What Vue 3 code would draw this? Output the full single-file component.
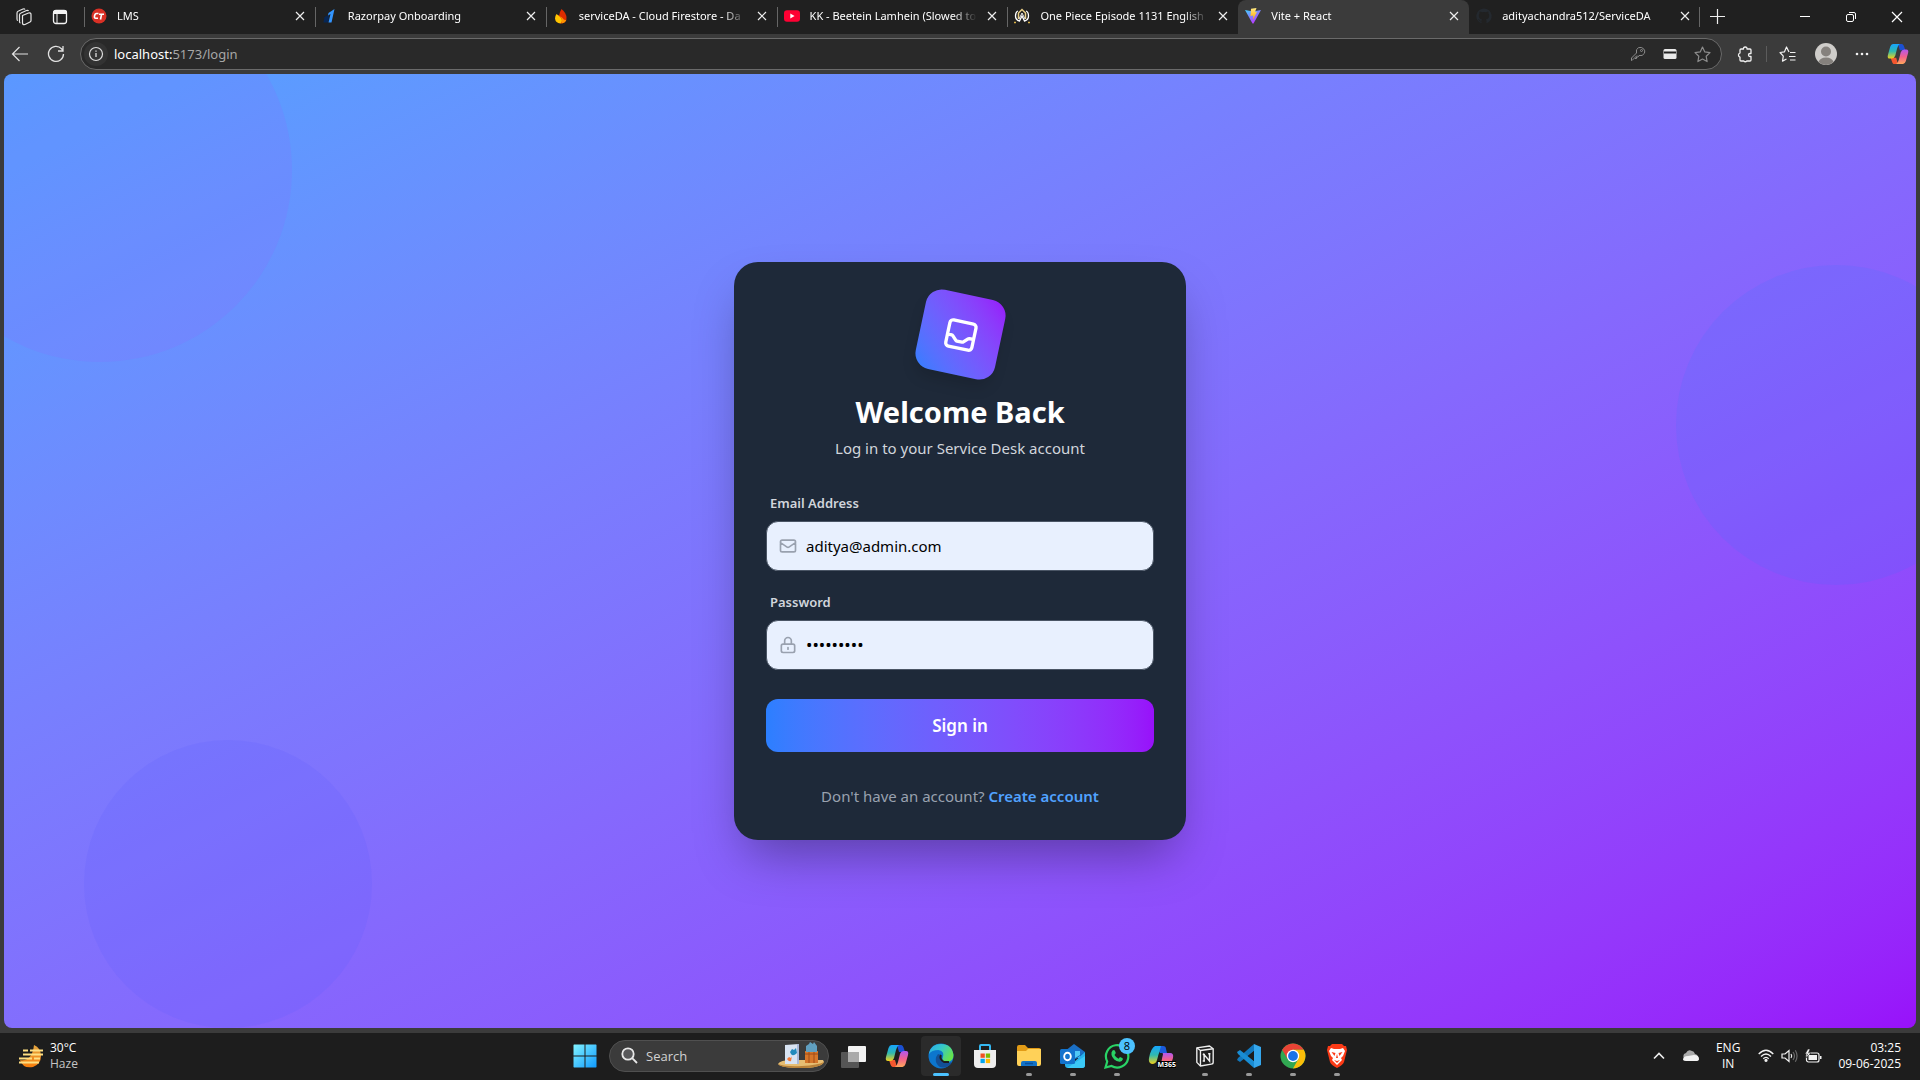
<script setup>
import { ref } from 'vue'

const email = ref('aditya@admin.com')
const password = ref('admin1234')

const tabs = [
  { title: 'LMS', icon: 'lms' },
  { title: 'Razorpay Onboarding', icon: 'razorpay' },
  { title: 'serviceDA - Cloud Firestore - Da', icon: 'firebase' },
  { title: 'KK - Beetein Lamhein (Slowed to', icon: 'youtube' },
  { title: 'One Piece Episode 1131 English', icon: 'anime' },
  { title: 'Vite + React', icon: 'vite', active: true },
  { title: 'adityachandra512/ServiceDA', icon: 'github' },
]
</script>

<template>
  <div class="screen">
    <header class="tabbar">
      <div class="tab-tools">
        <button class="icon-btn" aria-label="Workspaces">
          <svg width="18" height="18" viewBox="0 0 18 18" fill="none" stroke="#e6e6e6" stroke-width="1.2" stroke-linejoin="round"><path d="M7.500 7.500l6-2.500q2.500-.5 2.500 1.500v6q0 1-1 1.500l-5 2.500q-2.500.5-2.500-1.500zM4.500 13.500V7q0-1.500 1.500-2l5.500-2.500q1.500-.5 2 .5M2 11V5q0-1.500 1.500-2L8 1q1.500-.5 2 .5M2 11q0 1.500 1 1.500M4.500 13.500q0 1.500 1 1.500"/></svg>
        </button>
        <button class="icon-btn" aria-label="Tab actions">
          <svg width="16" height="16" viewBox="0 0 16 16"><rect x="1.500" y="1.500" width="13" height="13" rx="2.500" fill="none" stroke="#f4f4f4" stroke-width="1.300"/><path d="M1 5V3.500Q1 1 3.500 1h9Q15 1 15 3.500V5z" fill="#f4f4f4"/><path d="M5 5v9.500" stroke="#f4f4f4"/></svg>
        </button>
      </div>
      <nav class="tabs">
        <div v-for="tab in tabs" :key="tab.title" class="tab" :class="{ active: tab.active }">
          <svg class="favicon" width="16" height="16" viewBox="0 0 16 16">
            <template v-if="tab.icon === 'lms'">
              <circle cx="8" cy="8" r="7.500" fill="#d93025"/><path d="M7.500 5.500H5.500Q4 5.500 3.500 8T5 10.200h2M8 6.200h5M10.600 6.200L9.500 11.500" fill="none" stroke="#fff" stroke-width="1.600"/>
            </template>
            <template v-else-if="tab.icon === 'razorpay'">
              <path d="M7 6.500L2.500 9 1.500 14.500h5z" fill="#072654"/><path d="M12.500 1L6.500 5l-.5 2.500 2.500-1.500L6.500 14.500H9.500z" fill="#3395ff"/>
            </template>
            <template v-else-if="tab.icon === 'firebase'">
              <path d="M8.500 1q5 4 5 9t-5.500 5.500Q3 14.500 3 10q.5-2 2-3 0 0 1 1 .500-4 2.500-7z" fill="#dd2c00"/><path d="M3.500 6Q2 8 2 10.500q.5 4.500 5.500 5 1.500-.500 1.500-3.500Q8 9 5.500 7.500z" fill="#ffc400"/><path d="M7 8q2.500 2.500 1.500 7.500 4-.500 5-4-2 1.500-4-1.500z" fill="#ff9100"/>
            </template>
            <template v-else-if="tab.icon === 'youtube'">
              <rect y="2.300" width="16" height="11.500" rx="3" fill="#ff0033"/><path d="M6.300 5.500v5l4.300-2.500z" fill="#fff"/>
            </template>
            <template v-else-if="tab.icon === 'anime'">
              <path d="M4 3Q1.500 4 1.500 8t4 5l2.500-5 2.500 5q4-1 4-5T12 3" fill="none" stroke="#fff" stroke-width="1.300"/><path d="M4.500 11V5L8 1.500 11.500 5v6" fill="none" stroke="#e9cf87" stroke-width="1.500"/><path d="M5 11L8 5l3 6" fill="none" stroke="#eee"/><path d="M0 14.500h2M14 14.500h2" stroke="#d7b14a" stroke-width="1.500"/>
            </template>
            <template v-else-if="tab.icon === 'vite'">
              <defs><linearGradient id="viteBody" x1="0" y1="0" x2=".6" y2="1"><stop stop-color="#41d1ff"/><stop offset="1" stop-color="#bd34fe"/></linearGradient><linearGradient id="viteBolt" x1="0" y1="0" x2="0" y2="1"><stop stop-color="#ffea83"/><stop offset="1" stop-color="#ffa800"/></linearGradient></defs>
              <path d="M0 2l8 1.400L16 2 8.500 15.500h-1z" fill="url(#viteBody)"/><path d="M6 .8l5.500-.8-1.500 4 2-.3-4 8 .3-4.200-2.800.4z" fill="url(#viteBolt)"/>
            </template>
            <path v-else d="M8 .5A7.600 7.600 0 0 0 5.500 15.300V13.500q-2 .4-2.600-1.300l-1-.8q1-.4 2 1 .8.700 1.800.2l.4-1Q2.800 11 2.800 7.500q0-1 .8-2-.3-1 .1-2 1 0 2.200.8 2-.5 4.200 0 1.200-.8 2.200-.8.400 1 .1 2 .8 1 .8 2 0 3.500-3.300 4.100.6.500.6 1.600v2.100A7.600 7.600 0 0 0 8 .5z" fill="#24292f"/>
          </svg>
          <span class="tab-title">{{ tab.title }}</span>
          <button class="close" :aria-label="'Close ' + tab.title">
            <svg width="10" height="10" viewBox="0 0 10 10" stroke="#eee" stroke-width="1.200"><path d="M1 1l8 8M9 1L1 9"/></svg>
          </button>
        </div>
      </nav>
      <button class="icon-btn new-tab" aria-label="New tab">
        <svg width="15" height="15" viewBox="0 0 15 15" stroke="#eee" stroke-width="1.200"><path d="M7.500 0v15M0 7.500h15"/></svg>
      </button>
      <div class="window-controls">
        <button aria-label="Minimise"><svg width="12" height="12" viewBox="0 0 12 12" stroke="#fff"><path d="M1 5.500h10"/></svg></button>
        <button aria-label="Restore"><svg width="12" height="12" viewBox="0 0 12 12" fill="none" stroke="#fff"><rect x="1.500" y="3.500" width="7" height="7" rx="1.500"/><path d="M4 1.500h5q1.500 0 1.500 1.500v5"/></svg></button>
        <button aria-label="Close window"><svg width="12" height="12" viewBox="0 0 12 12" stroke="#fff" stroke-width="1.200"><path d="M1 1l10 10M11 1L1 11"/></svg></button>
      </div>
    </header>

    <div class="toolbar">
      <div class="history">
        <button class="icon-btn" aria-label="Back">
          <svg width="18" height="18" viewBox="0 0 18 18" fill="none" stroke="#e2e2e2" stroke-width="1.200"><path d="M17 9H1.500M8.500 2L1.500 9l7 7"/></svg>
        </button>
        <button class="icon-btn" aria-label="Refresh">
          <svg width="18" height="18" viewBox="0 0 18 18" fill="none" stroke="#e2e2e2" stroke-width="1.300"><path d="M16.500 9A7.500 7.500 0 1 1 14.500 3.800L16 5.500M16 1v5h-5"/></svg>
        </button>
      </div>
      <div class="address">
        <span class="site-info">
          <svg width="16" height="16" viewBox="0 0 16 16" fill="none" stroke="#ddd" stroke-width="1.200"><circle cx="8" cy="8" r="6.500"/><path d="M8 7v4M8 4.500v1.300" stroke-width="1.300"/></svg>
        </span>
        <span class="url"><b>localhost:</b>5173/login</span>
        <div class="address-icons">
          <svg width="16" height="16" viewBox="0 0 16 16" fill="none" stroke="#8c8c8c"><path d="M7 9.500L2 14.500H1.500V12L6.500 7Q5.500 3 8.500 1.700q3-1 5 1t1 4.500Q12.500 10.500 9 9.500L8 11H6.500v1.500H5"/><circle cx="11.500" cy="4.500" r="1"/></svg>
          <svg width="14" height="12" viewBox="0 0 14 12"><rect x=".5" y="1" width="13" height="10" rx="1.500" fill="#e9e9e9"/><path d="M1 4.500h12" stroke="#222" stroke-width="2"/></svg>
          <svg width="17" height="17" viewBox="0 0 17 17" fill="none" stroke="#8c8c8c" stroke-width="1.200" stroke-linejoin="round"><path d="M8.500 1l2.300 4.900 5.200.7-3.800 3.700.9 5.300-4.600-2.600-4.600 2.600.9-5.300L1 6.600l5.200-.7z"/></svg>
        </div>
      </div>
      <div class="browser-tools">
        <button class="icon-btn" aria-label="Extensions"><svg width="17" height="17" viewBox="0 0 17 17" fill="none" stroke="#f2f2f2" stroke-width="1.300" stroke-linejoin="round"><path d="M4 3h2.500q-.2-2 1.700-2t1.800 2h3q1 0 1 1v3.500h-1a1.500 1.500 0 0 0 0 3h1V14q0 1-1 1H9.800q-1.500 1.500-3 0H4q-1 0-1-1v-2.800a2.200 2.200 0 0 1 0-4.200V4q0-1 1-1z"/></svg></button>
        <i class="divider"></i>
        <button class="icon-btn" aria-label="Favourites"><svg width="18" height="17" viewBox="0 0 18 17" fill="none" stroke="#f2f2f2" stroke-width="1.200" stroke-linejoin="round"><path d="M10 6L7.500 1 5.500 5.800 1 6.500l3.300 3.600-.8 5L7.500 13M11 6.500h5.500M10 10.500h6.500M11 14h5.500"/></svg></button>
        <button class="icon-btn spaced" aria-label="Profile"><svg width="22" height="22" viewBox="0 0 22 22"><circle cx="11" cy="11" r="11" fill="#cfcdca"/><circle cx="11" cy="8.500" r="5" fill="#85817d"/><path d="M3.500 19Q5 14.500 11 14.500t7.500 4.500Q15 22 11 22t-7.500-3z" fill="#85817d"/></svg></button>
        <button class="icon-btn spaced" aria-label="More"><svg width="14" height="4" viewBox="0 0 14 4" fill="#f2f2f2"><circle cx="2" cy="2" r="1.300"/><circle cx="7" cy="2" r="1.300"/><circle cx="12" cy="2" r="1.300"/></svg></button>
        <button class="icon-btn spaced" aria-label="Copilot"><svg width="22" height="22" viewBox="0 0 24 24"><use href="#copilot"/></svg></button>
      </div>
    </div>

    <main class="page">
      <span class="circle circle-a"></span>
      <span class="circle circle-b"></span>
      <span class="circle circle-c"></span>
      <section class="card">
        <div class="logo">
          <svg width="40" height="40" viewBox="0 0 24 24" fill="none" stroke="#fff" stroke-width="2" stroke-linecap="round" stroke-linejoin="round"><path d="M20 13V6a2 2 0 0 0-2-2H6a2 2 0 0 0-2 2v7m16 0v5a2 2 0 0 1-2 2H6a2 2 0 0 1-2-2v-5m16 0h-2.600a1 1 0 0 0-.7.300l-2.400 2.400a1 1 0 0 1-.7.300h-3.200a1 1 0 0 1-.7-.3l-2.400-2.400a1 1 0 0 0-.7-.3H4"/></svg>
        </div>
        <h1>Welcome Back</h1>
        <p class="subtitle">Log in to your Service Desk account</p>
        <form @submit.prevent>
          <label for="email">Email Address</label>
          <div class="field">
            <svg width="20" height="20" viewBox="0 0 24 24" fill="none" stroke="#99a1af" stroke-width="2" stroke-linecap="round" stroke-linejoin="round"><path d="M3 8l7.900 5.300a2 2 0 0 0 2.200 0L21 8M5 19h14a2 2 0 0 0 2-2V7a2 2 0 0 0-2-2H5a2 2 0 0 0-2 2v10a2 2 0 0 0 2 2z"/></svg>
            <input id="email" v-model="email" type="email">
          </div>
          <label for="password">Password</label>
          <div class="field">
            <svg width="20" height="20" viewBox="0 0 24 24" fill="none" stroke="#99a1af" stroke-width="2" stroke-linecap="round" stroke-linejoin="round"><path d="M12 15v2m-6 4h12a2 2 0 0 0 2-2v-6a2 2 0 0 0-2-2H6a2 2 0 0 0-2 2v6a2 2 0 0 0 2 2zm10-10V7a4 4 0 0 0-8 0v4h8z"/></svg>
            <input id="password" v-model="password" type="password">
          </div>
          <button class="submit" type="submit">Sign in</button>
        </form>
        <p class="signup">Don't have an account? <a href="#">Create account</a></p>
      </section>
    </main>

    <footer class="taskbar">
      <div class="weather">
        <svg width="26" height="26" viewBox="0 0 26 26"><defs><linearGradient id="moon" x1="0" y1="0" x2="0" y2="1"><stop stop-color="#e2a541"/><stop offset="1" stop-color="#f97d0b"/></linearGradient></defs><path d="M16 2q7 3 7 11t-8 11Q5 26 2 17q12 2 14-15z" fill="url(#moon)"/><path d="M5 7.500h5M12 7.500h13M5 11.500h20M1 15.500h13M16 15.500h6M1 19.500h20" stroke="#ffdf82" stroke-width="2"/></svg>
        <div class="weather-text"><span>30°C</span><span class="muted">Haze</span></div>
      </div>

      <div class="apps">
        <button class="app" aria-label="Start"><svg width="24" height="24" viewBox="0 0 24 24"><defs><linearGradient id="win" x1="0" y1="0" x2="1" y2="1"><stop stop-color="#82f3ff"/><stop offset="1" stop-color="#0f9aff"/></linearGradient></defs><path d="M1 .5h10.500v11H.5V1zM12.500.5H23l.5.500v10.500h-11zM.5 12.500h11v11H1L.5 23zM12.500 12.500h11V23l-.5.500H12.500z" fill="url(#win)"/></svg></button>
        <label class="search">
          <svg width="17" height="17" viewBox="0 0 17 17" fill="#58585a" stroke="#e8e8e8" stroke-width="1.800"><circle cx="7" cy="7" r="5.700"/><path d="M11.200 11.200L16 16"/></svg>
          <input type="text" placeholder="Search" aria-label="Search">
          <svg width="48" height="28" viewBox="0 0 48 28"><path d="M1 22q2-4 14-4h31l1 2q-3 6-23 6T1 22z" fill="#e6bd72"/><path d="M1 22q8 3 24 2t22-4q-3 6-23 6T1 22z" fill="#b98239"/><path d="M8 3l14-1v20H8z" fill="#d8e3f2"/><path d="M20 2h2v20h-2z" fill="#a9b8d8"/><path d="M13 10l2-3 2 1 2-2 1 5q-4 4-6 1z" fill="#2189bc"/><path d="M10 17l2-2 2 1 1-2-1 5q-2 1-4-2z" fill="#f27836"/><path d="M28 9h13v12H28z" fill="#d6772a"/><path d="M28 12h13M32 9v12M37 9v12" stroke="#a04c18"/><path d="M29 4l3-2 1-2 3 2 1-2 3 4v6H29z" fill="#609fc0"/></svg>
        </label>
        <button class="app" aria-label="Task view"><svg width="26" height="24" viewBox="0 0 26 24"><rect x="8" y="2" width="18" height="16" rx="1" fill="#f3f3f3"/><rect x="1" y="8" width="18" height="16" rx="1" fill="#555"/><path d="M8 8h11v10H8z" fill="#aaa"/></svg></button>
        <button class="app" aria-label="Copilot"><svg width="24" height="24" viewBox="0 0 24 24">
          <defs>
            <linearGradient id="copA" x1="0" y1="0" x2="0" y2="1"><stop stop-color="#16a4ff"/><stop offset=".5" stop-color="#2fb9b0"/><stop offset="1" stop-color="#f2d21a"/></linearGradient>
            <linearGradient id="copB" x1="0" y1="0" x2="0" y2="1"><stop stop-color="#b057f2"/><stop offset=".5" stop-color="#f2608c"/><stop offset="1" stop-color="#ffa75b"/></linearGradient>
            <g id="copilot"><path d="M12 1h4q2 0 3 4l1 3h-6z" fill="#1b50d3"/><path d="M12 23H8q-2 0-3-4l-1-3h6z" fill="#f4572f"/><path d="M6.500 1H14q-2 1-3 5l-2 8q-1 3-4 3H3q-3 0-2-4l2.500-9Q4.500 1 6.500 1z" fill="url(#copA)"/><path d="M17.500 23H10q2-1 3-5l2-8q1-3 4-3h2q3 0 2 4l-2.500 9q-1 3-3 3z" fill="url(#copB)"/></g>
          </defs><use href="#copilot"/></svg></button>
        <button class="app current" aria-label="Edge"><svg width="26" height="26" viewBox="0 0 26 26"><defs><linearGradient id="edgeTop" x1="0" y1="0" x2="1" y2=".5"><stop stop-color="#2aa9ed"/><stop offset=".5" stop-color="#36c8c9"/><stop offset="1" stop-color="#65e34e"/></linearGradient></defs><circle cx="13" cy="13" r="12.500" fill="#0c76ce"/><path d="M1 10Q3 1 13 1q11 0 12.500 11 0 7-7 7-5 0-4-3 3-8-4-9-7 0-9.500 4z" fill="url(#edgeTop)"/><path d="M10 11q-4 5-1 10t9 3q4-1 6-5-5 2-9 0-5-3-2-7z" fill="#134f96"/><path d="M13 12q-2 4 3 7h5" fill="none" stroke="#1d1d1d" stroke-width="2"/></svg></button>
        <button class="app" aria-label="Store"><svg width="24" height="26" viewBox="0 0 24 26"><path d="M7 8V3q0-1 1-1h8q1 0 1 1v5" fill="none" stroke="#35b8f1" stroke-width="2"/><path d="M1 7h22v14q0 4-4 4H5q-4 0-4-4z" fill="#eee"/><path d="M7.500 10.500h4.300v4.300H7.500z" fill="#f25022"/><path d="M12.800 10.500h4.300v4.300h-4.300z" fill="#7fba00"/><path d="M7.500 15.800h4.300v4.300H7.500z" fill="#00a4ef"/><path d="M12.800 15.800h4.300v4.300h-4.300z" fill="#ffb900"/></svg></button>
        <button class="app open" aria-label="File Explorer"><svg width="26" height="24" viewBox="0 0 26 24"><path d="M1 3q0-2 2-2h6l3 3h11q2 0 2 2v5H1z" fill="#e29b16"/><path d="M1 7h9l2-2h13v15q0 2-2 2H3q-2 0-2-2z" fill="#ffd158"/><path d="M5 22v-3q0-2 2-2h12q2 0 2 2v3z" fill="#1372c5"/><path d="M9 19.500h8" stroke="#0a4e9a" stroke-width="1.500"/></svg></button>
        <button class="app open" aria-label="Outlook"><svg width="26" height="26" viewBox="0 0 26 26"><path d="M5 8l9-7 11 8v5H5z" fill="#1b6fc5"/><path d="M9 8h11v7H9z" fill="#50c8f5"/><path d="M25 9v13q0 3-3 3H8q-3 0-3-3v-4l9 1z" fill="#26b1ec"/><path d="M25 9L7 20l-2-2v-3l11 1z" fill="#1267b4"/><path d="M7 25l18-12v9q0 3-3 3z" fill="#3bc9f7"/><rect y="6" width="15" height="15" rx="1.500" fill="#1373cd"/><ellipse cx="7.500" cy="13.500" rx="3.300" ry="3.700" fill="none" stroke="#fff" stroke-width="1.900"/></svg></button>
        <button class="app open" aria-label="WhatsApp"><svg width="26" height="26" viewBox="0 0 26 26"><path d="M1.500 24.500l1.700-6A11.200 11.200 0 1 1 7.500 23z" fill="#1d1d1d" stroke="#29d366" stroke-width="2.200"/><path d="M8.500 7.500l1.500-.500q1 0 1.800 3L10.500 12q1.500 2.700 4 3.700l1.500-1.700q3 1 3 2-1 3-3.500 2.800Q9 17.500 7.500 12q-.5-3 1-4.500z" fill="#29d366"/></svg><span class="badge">8</span></button>
        <button class="app" aria-label="Microsoft 365 Copilot"><svg width="26" height="20" viewBox="0 0 26 20"><path d="M8 0h7q3 0 3 3l1 4h-7z" fill="#1a5bdd"/><path d="M7 0h6L9 14q-1 4-5 4-4-1-3-6Q3 2 7 0z" fill="url(#copA)"/><path d="M15 7h7q4 0 3 5l-2 6q-1 2-4 2h-7l2-9q0-3 1-4z" fill="url(#copB)"/><path d="M11 8h4l-2 9q-1 2-4 2z" fill="#1d1d1d"/></svg><span class="m365">M365</span></button>
        <button class="app open" aria-label="Notion"><svg width="20" height="22" viewBox="0 0 22 24"><path d="M2 3l14-2 4 3v15q0 2-2 2L6 23l-4-4z" fill="#1d1d1d" stroke="#eee" stroke-width="1.500" stroke-linejoin="round"/><path d="M2 3l4 3v17M6 6l14-2" fill="none" stroke="#eee" stroke-width="1.500"/><path d="M10 17.500V10.500l6 7V9.500M8.500 10.300h2.500M14.500 9.500h2.500M8.500 17.500h2.500" fill="none" stroke="#eee" stroke-width="1.600"/></svg></button>
        <button class="app open" aria-label="VS Code"><svg width="26" height="26" viewBox="0 0 26 26"><path d="M18 1l7 3v18l-7 3z" fill="#35a7ed"/><path d="M18 1v7L4 19l-3-2 1-2z" fill="#1177bd"/><path d="M18 25v-7L4 7 1 9l1 2z" fill="#198dd4"/><path d="M18 8v10l-6-5z" fill="#1d1d1d"/></svg></button>
        <button class="app open" aria-label="Chrome"><svg width="26" height="26" viewBox="0 0 26 26"><circle cx="13" cy="13" r="12.500" fill="#31a852"/><path d="M2.200 6.800A12.500 12.500 0 0 1 23.800 6.800H13L7.600 16z" fill="#e94335"/><path d="M23.800 6.800A12.500 12.500 0 0 1 13 25.500L18.400 16 13 6.800z" fill="#fbbd09"/><circle cx="13" cy="13" r="6.200" fill="#fff"/><circle cx="13" cy="13" r="4.900" fill="#1a73e8"/></svg></button>
        <button class="app open" aria-label="Brave"><svg width="22" height="26" viewBox="0 0 22 26"><path d="M6 1h10l2 2h2l1 4-3 12q-1 3-7 6-6-3-7-6L1 7l1-4h2z" fill="#fb3a16"/><path d="M5 5l3 1h6l3-1 2 3-2 5-2 2 1 2-5 5-5-5 1-2-2-2-2-5z" fill="#fff"/><path d="M5.500 9l4 1-1 3zM16.500 9l-4 1 1 3zM11 11l1 4h-2zM8 17l3 1 3-1-3 3z" fill="#fb3a16"/></svg></button>
      </div>

      <div class="tray">
        <svg width="12" height="8" viewBox="0 0 12 8" fill="none" stroke="#eee" stroke-width="1.600"><path d="M1 6.500l5-5 5 5"/></svg>
        <svg class="cloud" width="17" height="12" viewBox="0 0 17 12"><path d="M2 9Q0 4 4 3q2-4 6-2 2 0 3 3 4 1 3 6z" fill="#aaa"/><path d="M1 10q0-4 5-4l6-1q5 0 5 4 0 2-3 2H4q-2 0-3-1z" fill="#f2f2f2"/></svg>
        <div class="lang"><span>ENG</span><span>IN</span></div>
        <div class="status">
          <svg width="16" height="13" viewBox="0 0 16 13" fill="none" stroke="#f2f2f2" stroke-width="1.300"><path d="M.7 5q7.300-7.500 14.600 0M3 7.500q5-5 10 0M5.300 9.800q2.700-2.800 5.400 0"/><circle cx="8" cy="11.300" r="1" fill="#f2f2f2"/></svg>
          <svg width="17" height="14" viewBox="0 0 17 14" fill="none" stroke="#f2f2f2" stroke-width="1.200"><path d="M1 5h3l4-3.500v11L4 9H1z"/><path d="M10 5q1.500 2 0 4"/><path d="M12 3q3 4 0 8M14.300 1.200q3.500 5.800 0 11.600" stroke="#6a6a6a"/></svg>
          <svg width="17" height="14" viewBox="0 0 17 14"><rect x="1.500" y="4" width="12.500" height="9" rx="2" fill="none" stroke="#f2f2f2" stroke-width="1.200"/><rect x="3.500" y="6" width="8.500" height="5" fill="#f2f2f2"/><path d="M15 7h1.500v3H15z" fill="#f2f2f2"/><path d="M3 0L0 5h2.500L1 9l5-5H3.500L5 0z" fill="#f2f2f2" stroke="#1d1d1d" stroke-width=".5"/></svg>
        </div>
        <div class="clock"><span>03:25</span><span>09-06-2025</span></div>
      </div>
    </footer>
  </div>
</template>

<style>
body {
  margin: 0;
  background: #3b3b3b;
}
</style>

<style scoped>
* {
  box-sizing: border-box;
}
.screen {
  display: flex;
  flex-direction: column;
  min-height: 100vh;
  overflow: hidden;
  background: #3b3b3b;
  font-family: "Noto Sans", "Open Sans", sans-serif;
  color: #fff;
}
button {
  border: 0;
  padding: 0;
  background: none;
  color: inherit;
  font: inherit;
}
svg {
  display: block;
  flex: none;
}
.icon-btn {
  display: flex;
  align-items: center;
  justify-content: center;
}

/* Tab strip */
.tabbar {
  display: flex;
  height: 34px;
  background: #202020;
}
.tab-tools {
  display: flex;
  align-items: center;
  gap: 19px;
  width: 84px;
  padding-left: 15px;
}
.tabs {
  display: flex;
  flex: 1;
  max-width: 1616px;
}
.tab {
  position: relative;
  display: flex;
  flex: 1;
  align-items: center;
  min-width: 0;
  padding: 0 8px 2px 7px;
  border-radius: 8px 8px 0 0;
}
.tab::before {
  position: absolute;
  top: 7px;
  left: 0;
  width: 1px;
  height: 20px;
  background: #666;
  content: "";
}
.tab:last-child::after {
  position: absolute;
  top: 7px;
  right: 0;
  width: 1px;
  height: 20px;
  background: #666;
  content: "";
}
.tab.active {
  background: #3b3b3b;
}
.tab.active::before,
.tab.active + .tab::before {
  display: none;
}
.tab-title {
  flex: 1;
  overflow: hidden;
  margin: 0 8px 0 10px;
  font-size: 11px;
  line-height: 18px;
  white-space: nowrap;
  mask-image: linear-gradient(90deg, #000 calc(100% - 24px), transparent);
}
.close {
  display: flex;
  padding: 2px;
}
.new-tab {
  width: 36px;
  padding: 0 2px 2px 0;
}
.window-controls {
  display: flex;
  margin-left: auto;
}
.window-controls button {
  display: flex;
  align-items: center;
  justify-content: center;
  width: 46px;
}

/* Address bar */
.toolbar {
  display: flex;
  align-items: center;
  gap: 15px;
  height: 40px;
  padding: 0 11px;
}
.history {
  display: flex;
  gap: 18px;
}
.address {
  display: flex;
  flex: 1;
  align-items: center;
  height: 32px;
  padding: 0 10px 0 3px;
  border: 1px solid #6a6a6a;
  border-radius: 16px;
  background: #292929;
}
.site-info {
  display: flex;
  align-items: center;
  justify-content: center;
  width: 24px;
  height: 24px;
  border-radius: 50%;
  background: #333;
}
.url {
  margin-left: 6px;
  color: #a6a6a6;
  font-size: 13px;
  line-height: 20px;
}
.url b {
  color: #fff;
  font-weight: 400;
}
.address-icons {
  display: flex;
  align-items: center;
  gap: 17px;
  margin-left: auto;
}
.browser-tools {
  display: flex;
  align-items: center;
  gap: 12px;
}
.divider {
  width: 1px;
  height: 16px;
  background: #5c5c5c;
}
.spaced {
  margin-left: 6px;
}

/* Login page */
.page {
  position: relative;
  display: flex;
  flex: 1;
  align-items: center;
  justify-content: center;
  overflow: hidden;
  margin: 0 4px;
  border-radius: 8px;
  background: linear-gradient(to bottom right in oklab, #51a2ff, #9810fa);
}
.circle {
  position: absolute;
  border-radius: 50%;
}
.circle-a {
  top: -96px;
  left: -96px;
  width: 384px;
  height: 384px;
  background: rgba(173, 70, 255, 0.1);
}
.circle-b {
  top: 20%;
  right: -80px;
  width: 320px;
  height: 320px;
  background: rgba(43, 127, 255, 0.12);
}
.circle-c {
  bottom: 0;
  left: 80px;
  width: 288px;
  height: 288px;
  background: rgba(97, 95, 255, 0.18);
}
.card {
  position: relative;
  width: 452px;
  margin: 24px;
  padding: 32px;
  border-radius: 24px;
  background: #1e2939;
  box-shadow: 0 25px 50px -12px rgba(0, 0, 0, 0.35);
  text-align: center;
}
.logo {
  display: flex;
  align-items: center;
  justify-content: center;
  width: 81px;
  height: 81px;
  margin: 0 auto;
  border-radius: 16px;
  background: linear-gradient(to top right in oklab, #2b7fff, #9810fa);
  box-shadow: 0 10px 15px -3px rgba(0, 0, 0, 0.15);
  transform: rotate(12deg);
}
h1 {
  margin: 17px 0 0;
  font-size: 29px;
  font-weight: 700;
  line-height: 40px;
}
.subtitle {
  margin: 4px 0 33px;
  color: #d1d5dc;
  font-size: 15px;
  line-height: 24px;
}
form {
  display: flex;
  flex-direction: column;
}
form label {
  margin-bottom: 8px;
  padding-left: 4px;
  color: #d1d5dc;
  font-size: 13px;
  font-weight: 600;
  line-height: 20px;
  text-align: left;
}
.field {
  display: flex;
  align-items: center;
  height: 50px;
  margin-bottom: 21px;
  padding: 0 12px 0 11px;
  border: 1px solid #4a5565;
  border-radius: 12px;
  background: #e8f0fe;
}
.field input {
  flex: 1;
  min-width: 0;
  margin-left: 8px;
  padding: 0;
  border: 0;
  outline: 0;
  background: none;
  color: #000;
  font: 15px/24px "Noto Sans", sans-serif;
}
.field input[type="password"] {
  font-size: 17px;
}
.submit {
  height: 53px;
  margin-top: 8px;
  border-radius: 12px;
  background: linear-gradient(to right in oklab, #2b7fff, #9810fa);
  font-size: 17px;
  font-weight: 600;
}
.signup {
  margin: 32px 0 0;
  color: #99a1af;
  font-size: 15px;
  line-height: 24px;
}
.signup a {
  color: #51a2ff;
  font-weight: 600;
  text-decoration: none;
}

/* Windows taskbar */
.taskbar {
  display: grid;
  grid-template-columns: 1fr auto 1fr;
  align-items: center;
  height: 47px;
  margin-top: 5px;
  padding-bottom: 2px;
  background: #1d1d1d;
  font-family: "Open Sans", sans-serif;
  font-size: 12px;
  line-height: 16px;
}
.weather {
  display: flex;
  align-items: center;
  gap: 6px;
  padding-left: 18px;
}
.weather-text,
.lang,
.clock {
  display: flex;
  flex-direction: column;
}
.muted {
  color: #c5c5c5;
}
.apps {
  display: flex;
  align-items: center;
  gap: 4px;
  padding-left: 2px;
}
.app {
  position: relative;
  display: flex;
  align-items: center;
  justify-content: center;
  width: 40px;
  height: 40px;
  border-radius: 4px;
}
.app.open::after,
.app.current::after {
  position: absolute;
  bottom: 0;
  left: 17px;
  width: 6px;
  height: 3px;
  border-radius: 2px;
  background: #999;
  content: "";
}
.app.current {
  background: #2b2b2b;
}
.app.current::after {
  left: 12px;
  width: 16px;
  background: #4cc2ff;
}
.search {
  display: flex;
  align-items: center;
  width: 220px;
  height: 32px;
  padding: 0 3px 0 11px;
  border: 1px solid #505050;
  border-radius: 16px;
  background: #3b3b3b;
}
.search input {
  flex: 1;
  min-width: 0;
  margin-left: 8px;
  padding: 0;
  border: 0;
  outline: 0;
  background: none;
  color: #fff;
  font: 13px/20px "Open Sans", sans-serif;
}
.search input::placeholder {
  color: #d2d2d2;
  opacity: 1;
}
.badge {
  position: absolute;
  top: 2px;
  right: 2px;
  width: 16px;
  height: 16px;
  border-radius: 50%;
  background: #4cc2ff;
  color: #000;
  font-size: 11px;
  line-height: 16px;
}
.m365 {
  position: absolute;
  right: 5px;
  bottom: 8px;
  background: #000;
  font-size: 7px;
  font-weight: 700;
  line-height: 7px;
}
.tray {
  display: flex;
  align-items: center;
  justify-content: flex-end;
  padding-right: 19px;
}
.cloud {
  margin-left: 17px;
}
.lang {
  margin-left: 17px;
  text-align: center;
}
.status {
  display: flex;
  align-items: center;
  gap: 7px;
  margin: 0 16px 0 18px;
}
.clock {
  text-align: right;
}
</style>
